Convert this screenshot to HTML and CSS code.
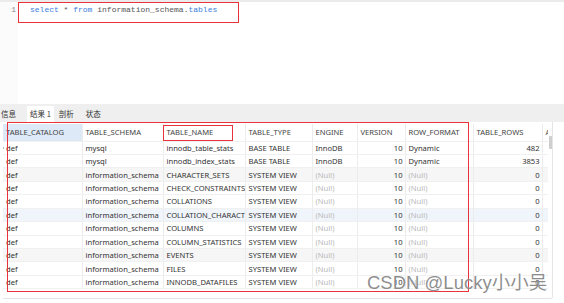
FILE: index.html
```html
<!DOCTYPE html>
<html>
<head>
<meta charset="utf-8">
<link rel="stylesheet" href="styles.css">
</head>
<body>
<div class="editor">
  <div class="gutter">1</div>
  <div class="code"><span class="kw">select</span> * <span class="kw">from</span> information_schema.<span class="kw">tables</span></div>
  <div class="mark mark-sql"></div>
</div>
<div class="tabs">
  <div class="tab">信息</div>
  <div class="tab active">结果 1</div>
  <div class="tab">剖析</div>
  <div class="tab">状态</div>
</div>
<div class="panel">
  <table class="grid">
    <colgroup>
      <col class="c1"><col class="c2"><col class="c3"><col class="c4"><col class="c5"><col class="c6"><col class="c7"><col class="c8"><col class="c9">
    </colgroup>
    <thead>
      <tr><th class="sel">TABLE_CATALOG</th><th>TABLE_SCHEMA</th><th>TABLE_NAME</th><th>TABLE_TYPE</th><th>ENGINE</th><th>VERSION</th><th>ROW_FORMAT</th><th>TABLE_ROWS</th><th>AVG_ROW_LENGTH</th></tr>
    </thead>
    <tbody>
      <tr><td class="first">def</td><td>mysql</td><td>innodb_table_stats</td><td>BASE TABLE</td><td>InnoDB</td><td class="num">10</td><td>Dynamic</td><td class="num">482</td><td></td></tr>
      <tr><td>def</td><td>mysql</td><td>innodb_index_stats</td><td>BASE TABLE</td><td>InnoDB</td><td class="num">10</td><td>Dynamic</td><td class="num">3853</td><td></td></tr>
      <tr class="gray"><td>def</td><td>information_schema</td><td>CHARACTER_SETS</td><td>SYSTEM VIEW</td><td class="null">(Null)</td><td class="num">10</td><td class="null">(Null)</td><td class="num">0</td><td></td></tr>
      <tr><td>def</td><td>information_schema</td><td>CHECK_CONSTRAINTS</td><td>SYSTEM VIEW</td><td class="null">(Null)</td><td class="num">10</td><td class="null">(Null)</td><td class="num">0</td><td></td></tr>
      <tr><td>def</td><td>information_schema</td><td>COLLATIONS</td><td>SYSTEM VIEW</td><td class="null">(Null)</td><td class="num">10</td><td class="null">(Null)</td><td class="num">0</td><td></td></tr>
      <tr class="blue"><td>def</td><td>information_schema</td><td>COLLATION_CHARACTER_SET_APPLICABILITY</td><td>SYSTEM VIEW</td><td class="null">(Null)</td><td class="num">10</td><td class="null">(Null)</td><td class="num">0</td><td></td></tr>
      <tr><td>def</td><td>information_schema</td><td>COLUMNS</td><td>SYSTEM VIEW</td><td class="null">(Null)</td><td class="num">10</td><td class="null">(Null)</td><td class="num">0</td><td></td></tr>
      <tr><td>def</td><td>information_schema</td><td>COLUMN_STATISTICS</td><td>SYSTEM VIEW</td><td class="null">(Null)</td><td class="num">10</td><td class="null">(Null)</td><td class="num">0</td><td></td></tr>
      <tr class="gray"><td>def</td><td>information_schema</td><td>EVENTS</td><td>SYSTEM VIEW</td><td class="null">(Null)</td><td class="num">10</td><td class="null">(Null)</td><td class="num">0</td><td></td></tr>
      <tr><td>def</td><td>information_schema</td><td>FILES</td><td>SYSTEM VIEW</td><td class="null">(Null)</td><td class="num">10</td><td class="null">(Null)</td><td class="num">0</td><td></td></tr>
      <tr><td>def</td><td>information_schema</td><td>INNODB_DATAFILES</td><td>SYSTEM VIEW</td><td class="null">(Null)</td><td class="num">10</td><td class="null">(Null)</td><td class="num">0</td><td></td></tr>
    </tbody>
  </table>
  <div class="row-pointer"></div>
  <div class="scroll-track"><div class="scroll-thumb"></div></div>
  <div class="mark mark-name"></div>
  <div class="mark mark-grid"></div>
  <div class="watermark">CSDN @Lucky小小吴</div>
</div>
</body>
</html>
```

FILE: styles.css
```css
* { box-sizing: border-box; }
html, body { margin: 0; padding: 0; background: #fff; }
body {
  width: 564px;
  height: 303px;
  overflow: hidden;
  font-family: "Noto Sans", "Noto Sans CJK SC", sans-serif;
  color: #333;
  position: relative;
}

.editor {
  height: 104px;
  border-top: 2px solid #ebebeb;
  display: flex;
  position: relative;
}
.gutter {
  width: 18px;
  background: #fbfbfb;
  font-family: "Liberation Mono", monospace;
  font-size: 8px;
  color: #888;
  text-align: right;
  padding: 3px 2px 0 0;
  line-height: 10px;
}
.code {
  padding: 3px 0 0 12px;
  font-family: "Liberation Mono", monospace;
  font-size: 8px;
  line-height: 10px;
  color: #555;
  white-space: pre;
}
.kw { color: #3c7ee0; }

.mark {
  position: absolute;
  border: 1.5px solid #e8323c;
}
.mark-sql { left: 18px; top: 0px; width: 221px; height: 21px; }

.tabs {
  height: 18px;
  background: #efefef;
  display: flex;
  align-items: stretch;
  padding-top: 2px;
  font-family: "Noto Sans CJK SC", sans-serif;
  font-size: 7.5px;
  color: #333;
}
.tab {
  padding: 0 3px;
  line-height: 16px;
  margin-right: 6px;
}
.tab:first-child { padding-left: 1px; margin-right: 8px; }
.tab.active {
  background: #fff;
  margin-right: 2px;
}

.panel {
  position: relative;
  margin-left: 3px;
  width: 550px;
  height: 177px;
  overflow: hidden;
  border-right: 1px solid #e4e4e4;
  border-bottom: 1px solid #e4e4e4;
  border-bottom-right-radius: 3px;
}
.grid {
  border-collapse: collapse;
  table-layout: fixed;
  width: 600px;
  margin-top: 2px;
  font-size: 7.6px;
}
.c1 { width: 79px; }
.c2 { width: 81px; }
.c3 { width: 82px; }
.c4 { width: 67px; }
.c5 { width: 45px; }
.c6 { width: 48px; }
.c7 { width: 68px; }
.c8 { width: 69px; }
.c9 { width: 61px; }

.grid th, .grid td {
  white-space: nowrap;
  overflow: hidden;
  text-overflow: clip;
  padding: 0 2px 0 3px;
  text-align: left;
  border-right: 1px solid #ececec;
  border-bottom: 1px solid #f0f0f0;
}
.grid th {
  height: 17px;
  font-weight: normal;
  color: #444;
}
.grid th.sel { background: #dde9f7; }
.grid td { height: 13.45px; line-height: 12px; color: #333; }
.grid td.num { text-align: right; }
.grid td.null { color: #b9b9b9; }
.grid tr.gray td { background: #f6f6f6; }
.grid tr.blue td { background: #f0f5fb; }

.row-pointer {
  position: absolute;
  left: -2px;
  top: 24px;
  width: 0;
  height: 0;
  border-top: 2px solid transparent;
  border-bottom: 2px solid transparent;
  border-left: 3px solid #444;
}
.scroll-track {
  position: absolute;
  left: 545px;
  top: 0;
  bottom: 0;
  width: 5px;
  background: #fff;
}
.scroll-thumb {
  margin-top: 14px;
  margin-left: 1px;
  width: 4px;
  height: 13px;
  background: #cfcfcf;
  border-radius: 1px;
}
.mark-name { left: 160px; top: 3px; width: 70px; height: 16px; }
.mark-grid { left: 4px; top: 0px; width: 462px; height: 170px; }

.watermark {
  position: absolute;
  left: 364px;
  top: 146px;
  font-family: "Liberation Sans", "Noto Sans CJK SC", sans-serif;
  font-size: 18.5px;
  color: rgba(110, 110, 110, 0.78);
  white-space: nowrap;
  text-shadow: 0 0 1px rgba(255,255,255,0.8);
}
```
